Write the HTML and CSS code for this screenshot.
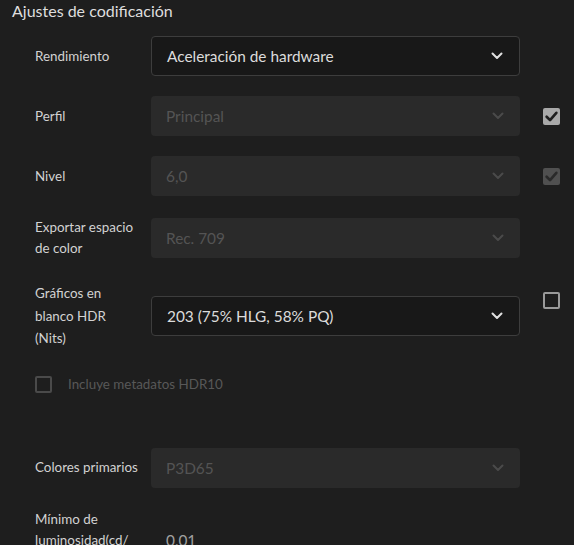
FILE: index.html
```html
<!DOCTYPE html>
<html lang="es">
<head>
<meta charset="utf-8">
<link rel="stylesheet" href="styles.css">
</head>
<body>
<div class="panel">
  <div class="title">Ajustes de codificación</div>

  <div class="row r1">
    <div class="label">Rendimiento</div>
    <div class="select active"><span>Aceleración de hardware</span>
      <svg class="chev" viewBox="0 0 12 8"><path d="M1.5 1.5 L6 6 L10.5 1.5"/></svg></div>
    <div class="cbcol"></div>
  </div>

  <div class="row r2">
    <div class="label">Perfil</div>
    <div class="select disabled"><span>Principal</span>
      <svg class="chev" viewBox="0 0 12 8"><path d="M1.5 1.5 L6 6 L10.5 1.5"/></svg></div>
    <div class="cbcol"><div class="cb checked"><svg viewBox="0 0 14 14"><path d="M3 7.2 L5.8 10 L11 4"/></svg></div></div>
  </div>

  <div class="row r3">
    <div class="label">Nivel</div>
    <div class="select disabled"><span>6,0</span>
      <svg class="chev" viewBox="0 0 12 8"><path d="M1.5 1.5 L6 6 L10.5 1.5"/></svg></div>
    <div class="cbcol"><div class="cb checked dim"><svg viewBox="0 0 14 14"><path d="M3 7.2 L5.8 10 L11 4"/></svg></div></div>
  </div>

  <div class="row r4">
    <div class="label">Exportar espacio<br>de color</div>
    <div class="select disabled"><span>Rec. 709</span>
      <svg class="chev" viewBox="0 0 12 8"><path d="M1.5 1.5 L6 6 L10.5 1.5"/></svg></div>
    <div class="cbcol"></div>
  </div>

  <div class="row r5">
    <div class="label tall">Gráficos en<br>blanco HDR<br>(Nits)</div>
    <div class="select active"><span>203 (75% HLG, 58% PQ)</span>
      <svg class="chev" viewBox="0 0 12 8"><path d="M1.5 1.5 L6 6 L10.5 1.5"/></svg></div>
    <div class="cbcol top"><div class="cb empty"></div></div>
  </div>

  <div class="hdr">
    <div class="cb emptydim"></div>
    <span>Incluye metadatos HDR10</span>
  </div>

  <div class="row r7">
    <div class="label">Colores primarios</div>
    <div class="select disabled"><span>P3D65</span>
      <svg class="chev" viewBox="0 0 12 8"><path d="M1.5 1.5 L6 6 L10.5 1.5"/></svg></div>
    <div class="cbcol"></div>
  </div>

  <div class="row r8">
    <div class="label">Mínimo de<br>luminosidad(cd/</div>
    <div class="value">0,01</div>
  </div>
</div>
</body>
</html>
```
FILE: styles.css
```css
html, body {
  margin: 0;
  padding: 0;
  background: #1e1e1e;
  height: 100%;
  overflow: hidden;
}
.panel {
  font-family: Lato, "Liberation Sans", sans-serif;
  color: #d4d4d4;
  padding: 0 0 0 12px;
}
.title {
  font-size: 16px;
  line-height: 22px;
  color: #dedede;
  height: 22px;
}
.row {
  display: flex;
  align-items: center;
  padding-left: 23px;
}
.label {
  width: 116px;
  flex: none;
  font-size: 13.4px;
  line-height: 21px;
  color: #d2d2d2;
  white-space: nowrap;
}
.label.tall { line-height: 22.5px; }
.select {
  width: 369px;
  height: 40px;
  box-sizing: border-box;
  border-radius: 4px;
  display: flex;
  align-items: center;
  justify-content: space-between;
  padding: 0 16px 0 15px;
  font-size: 15.4px;
  flex: none;
}
.select.active {
  background: #181818;
  border: 1px solid #3d3d3d;
  color: #dcdcdc;
}
.select.disabled {
  background: #2a2a2a;
  color: #545454;
}
.chev {
  width: 12px;
  height: 8px;
  fill: none;
  stroke-width: 2;
  stroke-linecap: round;
  stroke-linejoin: round;
}
.active .chev { stroke: #e0e0e0; }
.disabled .chev { stroke: #4a4a4a; }
.cbcol {
  width: 17px;
  margin-left: 23px;
  flex: none;
}
.cbcol.top { align-self: flex-start; margin-top: 10px; }
.cb {
  width: 17px;
  height: 17px;
  box-sizing: border-box;
  border-radius: 2px;
}
.cb svg {
  width: 17px;
  height: 17px;
  display: block;
  fill: none;
  stroke-width: 2.2;
  stroke-linecap: round;
  stroke-linejoin: round;
}
.cb.checked { background: #a9a9a9; }
.cb.checked svg { stroke: #1f1f1f; }
.cb.checked.dim { background: #505050; }
.cb.checked.dim svg { stroke: #2a2a2a; }
.cb.empty { border: 2px solid #9a9a9a; }
.cb.emptydim { border: 2px solid #4a4a4a; }
.r1 { margin-top: 14px; }
.r2 { margin-top: 20px; }
.r3 { margin-top: 20px; }
.r4 { margin-top: 21px; }
.r5 { margin-top: 23px; }
.hdr {
  display: flex;
  align-items: center;
  padding-left: 23px;
  margin-top: 26px;
  height: 17px;
  font-size: 13.4px;
  color: #585858;
}
.hdr span { margin-left: 16px; }
.r7 { margin-top: 55px; }
.r8 {
  margin-top: 21px;
  align-items: flex-end;
}
.value {
  font-size: 15.4px;
  color: #a0a0a0;
  padding-left: 15px;
  line-height: 21px;
}
```
